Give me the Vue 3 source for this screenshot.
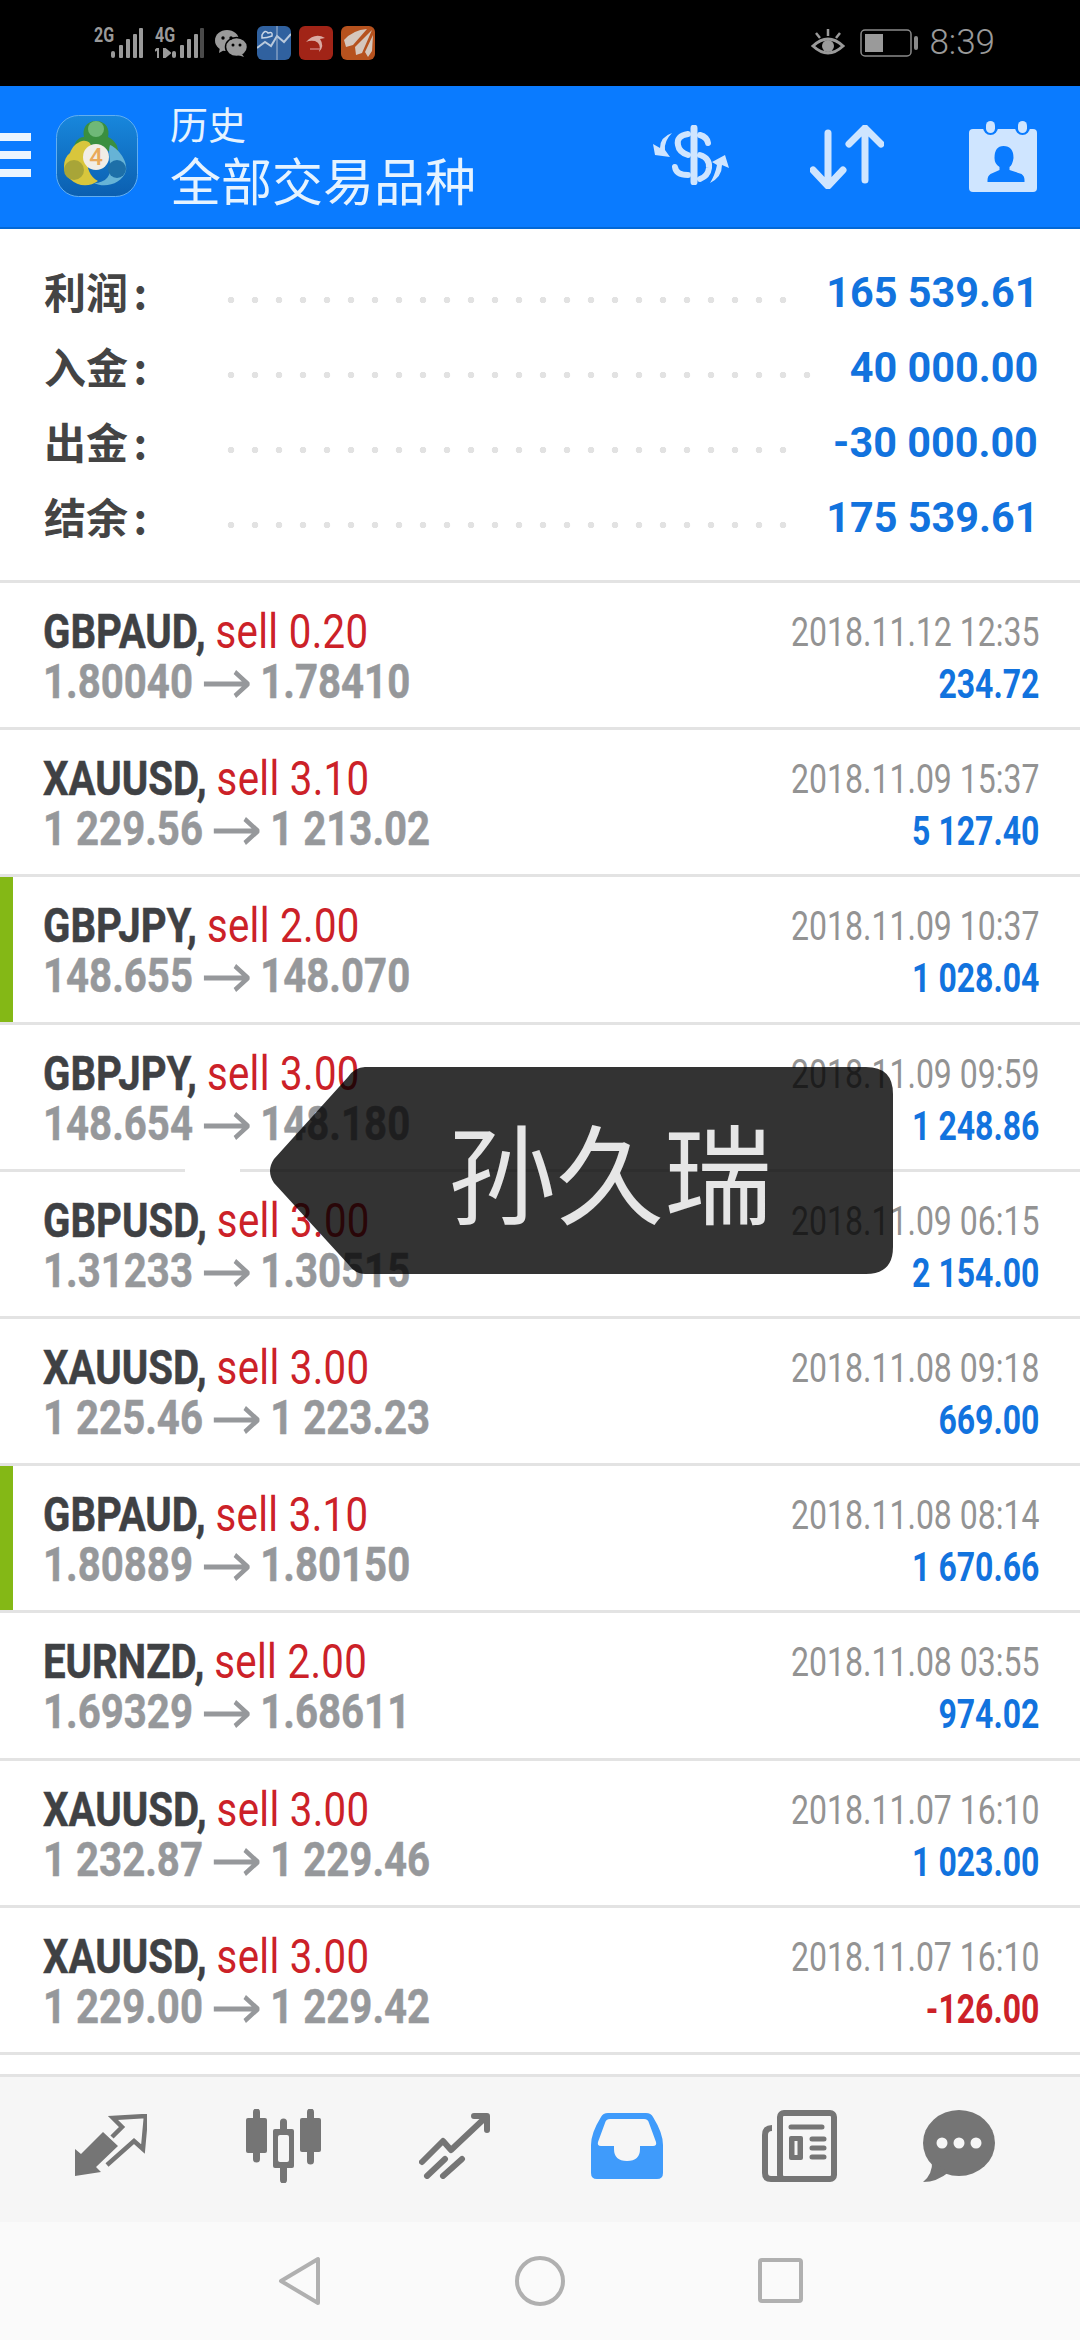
<script setup>
const summary = [
  { label: '利润', value: '165 539.61', dots: 24 },
  { label: '入金', value: '40 000.00', dots: 25 },
  { label: '出金', value: '-30 000.00', dots: 24 },
  { label: '结余', value: '175 539.61', dots: 24 }
]
const rows = [
  { sym: 'GBPAUD', lot: '0.20', a: '1.80040', b: '1.78410', t: '2018.11.12 12:35', p: '234.72' },
  { sym: 'XAUUSD', lot: '3.10', a: '1 229.56', b: '1 213.02', t: '2018.11.09 15:37', p: '5 127.40' },
  { sym: 'GBPJPY', lot: '2.00', a: '148.655', b: '148.070', t: '2018.11.09 10:37', p: '1 028.04', mark: true },
  { sym: 'GBPJPY', lot: '3.00', a: '148.654', b: '148.180', t: '2018.11.09 09:59', p: '1 248.86' },
  { sym: 'GBPUSD', lot: '3.00', a: '1.31233', b: '1.30515', t: '2018.11.09 06:15', p: '2 154.00' },
  { sym: 'XAUUSD', lot: '3.00', a: '1 225.46', b: '1 223.23', t: '2018.11.08 09:18', p: '669.00' },
  { sym: 'GBPAUD', lot: '3.10', a: '1.80889', b: '1.80150', t: '2018.11.08 08:14', p: '1 670.66', mark: true },
  { sym: 'EURNZD', lot: '2.00', a: '1.69329', b: '1.68611', t: '2018.11.08 03:55', p: '974.02' },
  { sym: 'XAUUSD', lot: '3.00', a: '1 232.87', b: '1 229.46', t: '2018.11.07 16:10', p: '1 023.00' },
  { sym: 'XAUUSD', lot: '3.00', a: '1 229.00', b: '1 229.42', t: '2018.11.07 16:10', p: '-126.00', loss: true }
]
</script>

<template>
  <div class="page">
    <header class="status">
      <div class="net">
        <span class="net-label">2G</span>
        <svg class="bars" width="32" height="30" viewBox="0 0 32 30"><g fill="#9a9a9a"><rect x="0" y="23" width="4" height="7" rx="2"/><rect x="8" y="17" width="4" height="13" rx="1"/><rect x="15" y="11" width="4" height="19" rx="1"/><rect x="22" y="6" width="4" height="24" rx="1"/><rect x="28" y="0" width="4" height="30" rx="1"/></g></svg>
      </div>
      <div class="net net-2">
        <span class="net-label">4G</span>
        <svg class="arrows-4g" width="16" height="10" viewBox="0 0 16 10"><path d="M3 0V10M0 3L3 0M9 0V10L15 5Z" stroke="#9a9a9a" stroke-width="2" fill="#9a9a9a"/></svg>
        <svg class="bars" width="32" height="30" viewBox="0 0 32 30"><g fill="#9a9a9a"><rect x="0" y="23" width="4" height="7" rx="2"/><rect x="8" y="17" width="4" height="13" rx="1"/><rect x="15" y="11" width="4" height="19" rx="1"/><rect x="22" y="6" width="4" height="24" rx="1"/><rect x="28" y="0" width="4" height="30" rx="1" fill="#4a4a4a"/></g></svg>
      </div>
      <svg class="wechat" width="32" height="27" viewBox="0 0 32 27">
        <ellipse cx="12" cy="10.500" rx="12" ry="10.500" fill="#9a9a9a"/><path d="M5 17L4 23L11 19Z" fill="#9a9a9a"/>
        <ellipse cx="21.500" cy="17" rx="11" ry="9.500" fill="#9a9a9a" stroke="#000" stroke-width="1.500"/><path d="M27 24L29 27L23 25Z" fill="#9a9a9a"/>
        <circle cx="8" cy="8" r="1.700"/><circle cx="16" cy="8" r="1.700"/><circle cx="18" cy="15" r="1.500"/><circle cx="25" cy="15" r="1.500"/>
      </svg>
      <svg class="app" width="34" height="34" viewBox="0 0 34 34">
        <rect width="34" height="34" rx="6" fill="#30619f"/>
        <path d="M0 22L8 16L14 20L20 10L27 16L34 8" stroke="#b9c9dc" stroke-width="2" fill="none"/>
        <path d="M20 0V34" stroke="#a9bcd3" stroke-width="1"/>
        <path d="M5 9Q8 3 11 7Q16 5 15 10Q10 12 5 12Z" fill="none" stroke="#c9d6e6" stroke-width="1.500"/>
      </svg>
      <svg class="app" width="34" height="34" viewBox="0 0 34 34">
        <rect width="34" height="34" rx="6" fill="#a12417"/>
        <path d="M7 16Q16 6 26 12L21 13Q26 20 20 26Q23 18 16 15Q11 14 7 16Z" fill="#d9aaa3"/>
        <path d="M11 23H21" stroke="#c77" stroke-width="1.500"/>
      </svg>
      <svg class="app" width="34" height="34" viewBox="0 0 34 34">
        <rect width="34" height="34" rx="6" fill="#b6521e"/>
        <path d="M3 14Q12 4 26 3L12 19L5 21ZM14 21L31 4L21 27L15 29ZM24 26L32 9L31 25L27 31Z" fill="#d5c7bd"/>
      </svg>
      <svg class="eye" width="34" height="29" viewBox="0 0 34 29">
        <path d="M2 17Q17 3 32 17Q17 31 2 17Z" fill="none" stroke="#9a9a9a" stroke-width="3"/>
        <circle cx="17" cy="17" r="6" fill="#9a9a9a"/>
        <path d="M17 0V7M5 4L9 9M29 4L25 9" stroke="#9a9a9a" stroke-width="2.500"/>
      </svg>
      <svg class="battery" width="58" height="28" viewBox="0 0 58 28">
        <rect x="1" y="1" width="50" height="26" rx="4" fill="none" stroke="#8a8a8a" stroke-width="1.500"/>
        <rect x="5" y="5" width="18" height="18" fill="#9a9a9a"/>
        <rect x="54" y="7" width="4" height="14" rx="2" fill="#8a8a8a"/>
      </svg>
      <span class="clock">8:39</span>
    </header>

    <div class="appbar">
      <div class="burger"><i></i><i></i><i></i></div>
      <svg class="logo" width="82" height="82" viewBox="0 0 82 82">
        <defs>
          <linearGradient id="lg" x1="0" y1="0" x2="0" y2="1"><stop offset="0" stop-color="#1887dc"/><stop offset="1" stop-color="#0b5fb0"/></linearGradient>
        </defs>
        <rect x="0.500" y="0.500" width="81" height="81" rx="22" fill="url(#lg)" stroke="#62aef0" stroke-width="1"/>
        <path d="M40 6C50 6 54 14 52 22C60 26 62 32 62 36L52 36C48 30 32 30 26 36L18 34C18 28 22 22 28 22C26 14 30 6 40 6Z" fill="#3a8f3f"/>
        <ellipse cx="40" cy="14" rx="8" ry="8" fill="#6fb878"/>
        <path d="M54 30C64 34 72 48 70 56C66 68 50 74 38 68C50 68 56 60 54 50C54 42 52 36 54 30Z" fill="#66b3d6"/>
        <path d="M26 26C36 24 38 34 32 44C30 52 34 62 42 66C34 72 22 72 14 64C6 58 6 44 14 38C16 32 20 28 26 26Z" fill="#d8c63c"/>
        <circle cx="18" cy="55" r="10" fill="#a8a538"/>
        <circle cx="61" cy="54" r="9" fill="#1d6fa8"/>
        <circle cx="40" cy="42" r="13" fill="#f1ede6"/>
        <text x="40" y="50" text-anchor="middle" class="logo-four">4</text>
      </svg>
      <div class="titles">
        <div class="title-small">历史</div>
        <div class="title-big">全部交易品种</div>
      </div>
      <svg class="act act-money" width="78" height="60" viewBox="0 0 78 60" fill="none" stroke="#cfe5ff">
        <path d="M42 3V57" stroke-width="7" stroke-linecap="round"/>
        <path d="M36 9Q24 11 26 20Q27 27 36 30M48 10Q55 12 56 18M48 30Q58 33 57 43Q56 51 48 54M36 50Q24 50 23 42" stroke-width="6" stroke-linecap="round"/>
        <path d="M20 8Q8 12 8 23L1 19L3 30L18 32L13 25Q12 16 20 8Z" fill="#cfe5ff" stroke="none"/>
        <path d="M58 58Q70 52 70 40L77 43L73 30L60 37L65 40Q63 50 58 58Z" fill="#cfe5ff" stroke="none"/>
      </svg>
      <svg class="act act-sort" width="74" height="64" viewBox="0 0 74 64" fill="none" stroke="#cfe5ff" stroke-linecap="round" stroke-linejoin="round">
        <path d="M18 8V60M3 45L18 61L33 45" stroke-width="7"/>
        <path d="M55 3V55M39 19L55 3L71 19" stroke-width="7"/>
      </svg>
      <svg class="act act-cal" width="68" height="72" viewBox="0 0 68 72">
        <path d="M4 9H64Q68 9 68 13V68Q68 72 64 72H4Q0 72 0 68V13Q0 9 4 9Z" fill="#cfe5ff"/>
        <rect x="14" y="0" width="15" height="15" rx="7.500" fill="#0a7bff"/><rect x="46" y="0" width="15" height="15" rx="7.500" fill="#0a7bff"/>
        <rect x="17" y="1" width="9" height="12" rx="4.500" fill="#cfe5ff"/><rect x="49" y="1" width="9" height="12" rx="4.500" fill="#cfe5ff"/>
        <path d="M34 26Q44 26 44 38Q43 45 40 47V50L52 54Q55 56 55 60V62H18V60Q18 56 21 54L30 50V47Q25 44 25 38Q25 26 34 26Z" fill="#0a7bff" transform="translate(0.500 0)"/>
      </svg>
    </div>

    <section class="summary">
      <div v-for="s in summary" :key="s.label" class="sum-row">
        <span class="sum-label">{{ s.label }} :</span>
        <span class="dots" :style="{ width: s.dots * 24 + 'px' }"></span>
        <span class="sum-value">{{ s.value }}</span>
      </div>
    </section>

    <section class="list">
      <div v-for="(r, i) in rows" :key="i" class="row" :class="{ mark: r.mark }">
        <div class="row-left">
          <div class="row-title"><b>{{ r.sym }},</b> <span class="sell">sell {{ r.lot }}</span></div>
          <div class="row-price">{{ r.a }}<svg class="arrow" width="56" height="30" viewBox="0 0 56 30" fill="none" stroke="#96989b"><path d="M0 15H54M38 3L54 15L38 27" stroke-width="5"/></svg>{{ r.b }}</div>
        </div>
        <div class="row-right">
          <div class="row-time">{{ r.t }}</div>
          <div class="row-profit" :class="{ loss: r.loss }">{{ r.p }}</div>
        </div>
      </div>
    </section>

    <div class="spacer"></div>

    <nav class="tabs">
      <div class="tab">
        <svg width="72" height="63" viewBox="0 0 72 63">
          <path d="M0 35L6 40L28 18L43 32L21 53L26 58L0 62Z" fill="#757575"/>
          <path d="M32 51L59 27L68 35L71 2L38 4L47 13L37 23" fill="none" stroke="#757575" stroke-width="4.500"/>
        </svg>
      </div>
      <div class="tab">
        <svg width="75" height="74" viewBox="0 0 75 74" fill="#757575">
          <rect x="0" y="9" width="21" height="35" rx="2"/><path d="M10.500 3V50" stroke="#757575" stroke-width="7" stroke-linecap="round"/>
          <rect x="54" y="9" width="21" height="34" rx="2"/><path d="M64.500 3V52" stroke="#757575" stroke-width="7" stroke-linecap="round"/>
          <path d="M37.500 13V71" stroke="#757575" stroke-width="7" stroke-linecap="round"/>
          <rect x="27" y="20" width="21" height="39" rx="2"/>
          <rect x="32" y="26" width="11" height="27" rx="2" fill="#f6f6f6"/>
        </svg>
      </div>
      <div class="tab">
        <svg width="72" height="67" viewBox="0 0 72 67" fill="none" stroke="#757575" stroke-width="6" stroke-linecap="round" stroke-linejoin="round">
          <path d="M3 50L24 29L32 38L67 5"/><path d="M55 4H68V18"/>
          <path d="M8 64L26 47M24 64L43 47"/>
        </svg>
      </div>
      <div class="tab">
        <svg width="72" height="66" viewBox="0 0 72 66">
          <path d="M17 0H55Q60 0 62 4Q72 20 72 32V60Q72 66 66 66H6Q0 66 0 60V32Q0 20 10 4Q12 0 17 0Z" fill="#3f9bfb"/>
          <path d="M19 6H53Q57 6 58 10L65 29Q66 33 62 33H49V36Q49 48 36 48Q23 48 23 36V33H10Q6 33 7 29L14 10Q15 6 19 6Z" fill="#f6f6f6"/>
        </svg>
      </div>
      <div class="tab">
        <svg width="75" height="72" viewBox="0 0 75 72" fill="none" stroke="#757575">
          <rect x="18" y="3" width="54" height="66" rx="4" stroke-width="6"/>
          <path d="M10 18Q3 18 3 25V63Q3 69 9 69H22" stroke-width="6"/>
          <path d="M29 17H60M50 29H62M50 38H62M50 47H62" stroke-width="5" stroke-linecap="round"/>
          <rect x="27" y="26" width="14" height="24" rx="2" fill="#757575" stroke="none"/>
          <rect x="32.500" y="31" width="3" height="14" fill="#f6f6f6" stroke="none"/>
        </svg>
      </div>
      <div class="tab tab-last">
        <svg width="72" height="72" viewBox="0 0 72 72">
          <ellipse cx="36" cy="33" rx="36" ry="33" fill="#757575"/>
          <path d="M9 50Q10 64 0 72Q14 72 26 62Z" fill="#757575"/>
          <circle cx="19" cy="33" r="5.500" fill="#f6f6f6"/><circle cx="36" cy="33" r="5.500" fill="#f6f6f6"/><circle cx="53" cy="33" r="5.500" fill="#f6f6f6"/>
        </svg>
      </div>
    </nav>

    <footer class="sysnav">
      <svg width="44" height="50" viewBox="0 0 44 50"><path d="M3 25L40 3V47Z" fill="none" stroke="#b0b0b0" stroke-width="4" stroke-linejoin="round"/></svg>
      <svg width="50" height="50" viewBox="0 0 50 50"><circle cx="25" cy="25" r="23" fill="none" stroke="#b0b0b0" stroke-width="4"/></svg>
      <svg width="45" height="45" viewBox="0 0 45 45"><rect x="2" y="2" width="41" height="41" rx="2" fill="none" stroke="#b0b0b0" stroke-width="4"/></svg>
    </footer>

    <div class="line-gap"></div>
    <div class="toast">
      <svg class="toast-shape" width="623" height="207" viewBox="0 0 623 207">
        <path d="M95 0Q85 0 78 10L4 92Q-4 104 4 116L78 197Q85 207 95 207H596Q623 207 623 180V27Q623 0 596 0Z" fill="#000" fill-opacity="0.8"/>
      </svg>
      <span class="toast-text">孙久瑞</span>
    </div>
  </div>
</template>

<style>
html, body { margin: 0; background: #fff; }
</style>

<style scoped>
.page {
  position: relative;
  width: 1080px;
  height: 2340px;
  overflow: hidden;
  background: #fff;
  font-family: Roboto, "Noto Sans CJK SC", sans-serif;
}
.status {
  height: 86px;
  background: #000;
  display: flex;
  align-items: center;
  padding: 0 85px 0 94px;
  box-sizing: border-box;
}
.net { position: relative; width: 49px; height: 30px; margin-right: 12px; }
.net-2 { width: 49px; margin-right: 11px; }
.net-label {
  position: absolute;
  left: 0;
  top: -3px;
  font-size: 20px;
  font-weight: 700;
  line-height: 20px;
  color: #9a9a9a;
  transform: scaleX(.8);
  transform-origin: left;
}
.bars { position: absolute; right: 0; top: 0; }
.arrows-4g { position: absolute; left: 0; bottom: 0; }
.wechat { margin-right: 10px; }
.app { margin-right: 8px; }
.eye { margin-left: auto; margin-right: 15px; }
.battery { margin-right: 11px; }
.clock { font-size: 35px; color: #9a9a9a; font-weight: 300; line-height: 40px; }

.appbar {
  height: 143px;
  box-sizing: border-box;
  border-bottom: 2px solid #0368d6;
  background: #0a7bff;
  display: flex;
  align-items: center;
  position: relative;
}
.burger { width: 31px; display: flex; flex-direction: column; gap: 10px; margin-top: -3px; }
.burger i { display: block; height: 8px; background: #eaf5ff; }
.logo { margin-left: 25px; margin-top: -1px; flex: none; }
.titles { margin-left: 32px; width: 440px; color: #e6f3ff; font-family: "Noto Sans CJK SC", sans-serif; font-weight: 400; margin-top: -2px; }
.title-small { font-size: 38px; line-height: 46px; }
.title-big { font-size: 51px; line-height: 66px; }
.act { flex: none; position: absolute; }
.act-money { left: 652px; top: 39px; }
.act-sort { left: 810px; top: 39px; }
.act-cal { left: 969px; top: 34px; }

.summary {
  height: 354px;
  box-sizing: border-box;
  border-bottom: 3px solid #e3e3e3;
  padding-top: 33px;
}
.sum-row { height: 75px; position: relative; display: flex; align-items: center; padding: 0 42px 0 44px; }
.sum-label {
  width: 175px;
  flex: none;
  font-family: "Noto Sans CJK SC", sans-serif;
  font-weight: 700;
  font-size: 42px;
  line-height: 59px;
  margin-bottom: 19px;
  word-spacing: -4px;
  color: #444;
  white-space: nowrap;
}
.dots {
  height: 6px;
  flex: none;
  background-image: radial-gradient(circle at 12px 3px, #e2e2e2 3px, rgba(226, 226, 226, 0) 3.6px);
  background-size: 24px 6px;
  background-repeat: repeat-x;
}
.sum-value {
  margin-left: auto;
  font-size: 42px;
  font-weight: 700;
  color: #1273de;
  line-height: 61px;
  white-space: nowrap;
  margin-bottom: 14px;
  transform: scaleX(.985);
  transform-origin: right;
}

.row {
  height: 147.2px;
  box-sizing: border-box;
  border-bottom: 3px solid #e3e3e3;
  position: relative;
  display: flex;
  justify-content: space-between;
  padding: 24px 41px 0 43px;
}
.row.mark::before {
  content: "";
  position: absolute;
  left: 0;
  top: 0;
  bottom: 0;
  width: 13px;
  background: #84b816;
}
.row-left { transform: scaleX(.82); transform-origin: left top; white-space: nowrap; flex: none; }
.row-title, .row-price { font-size: 49px; line-height: 50px; }
.row-title { color: #3f4144; }
.row-title b { font-weight: 700; -webkit-text-stroke: .5px #3f4144; }
.sell { color: #cc2128; font-weight: 400; margin-left: 0; letter-spacing: .4px; }
.row-price { color: #96989b; font-weight: 700; -webkit-text-stroke: .5px #96989b; }
.arrow { margin: 0 13px; vertical-align: -1px; }
.row-right { text-align: right; white-space: nowrap; flex: none; transform: scaleX(.8); transform-origin: right top; }
.row-time { font-size: 40px; line-height: 52px; color: #939393; }
.row-profit { font-size: 40px; line-height: 52px; font-weight: 700; color: #1273de; }
.row-profit.loss { color: #cc2128; }

.spacer { height: 19px; }
.tabs {
  height: 148px;
  box-sizing: border-box;
  border-top: 3px solid #e3e3e3;
  background: #f6f6f6;
  display: grid;
  grid-template-columns: repeat(6, 172px);
  padding-left: 25px;
  align-items: center;
}
.tab { display: flex; justify-content: center; margin-top: -7px; }
.tab-last { margin-left: -24px; }

.sysnav {
  height: 118px;
  background: #fafafa;
  position: relative;
  display: flex;
  align-items: center;
  padding: 0 277px 0 278px;
  justify-content: space-between;
}

.line-gap { position: absolute; left: 185px; top: 1167px; width: 55px; height: 7px; background: #fff; }
.toast { position: absolute; left: 270px; top: 1067px; width: 623px; height: 207px; }
.toast-shape { position: absolute; inset: 0; overflow: visible; }
.toast-text {
  position: absolute;
  left: 178px;
  top: 36px;
  font-family: "Noto Sans CJK SC", sans-serif;
  font-size: 108px;
  line-height: 132px;
  color: #e6e6e6;
  white-space: nowrap;
}
.logo-four { font-family: Roboto, sans-serif; font-size: 24px; font-weight: 500; fill: #e9a95a; }
</style>
